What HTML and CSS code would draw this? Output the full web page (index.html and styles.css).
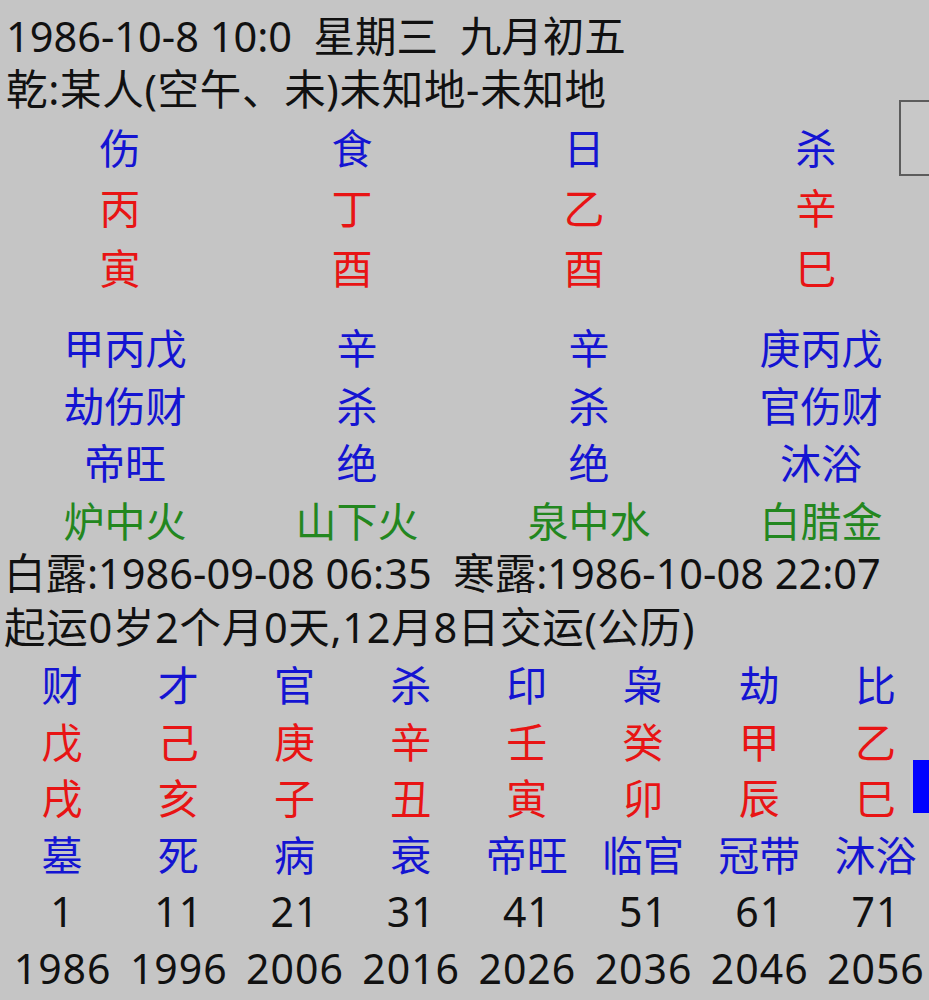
FILE: index.html
```html
<!DOCTYPE html>
<html lang="zh-CN">
<head>
<meta charset="utf-8">
<title>排盘</title>
<link rel="stylesheet" href="styles.css">
</head>
<body>
<div class="screen">
  <div class="header">
    <div class="line">1986-10-8 10:0&nbsp;&nbsp;星期三&nbsp;&nbsp;九月初五</div>
    <div class="line wide">乾:某人(空午、未)未知地-未知地</div>
  </div>

  <div class="pillars">
    <div class="cell blue">伤</div><div class="cell blue">食</div><div class="cell blue">日</div><div class="cell blue">杀</div>
    <div class="cell red">丙</div><div class="cell red">丁</div><div class="cell red">乙</div><div class="cell red">辛</div>
    <div class="cell red">寅</div><div class="cell red">酉</div><div class="cell red">酉</div><div class="cell red">巳</div>
  </div>

  <div class="hidden">
    <div class="cell blue">甲丙戊</div><div class="cell blue">辛</div><div class="cell blue">辛</div><div class="cell blue">庚丙戊</div>
    <div class="cell blue">劫伤财</div><div class="cell blue">杀</div><div class="cell blue">杀</div><div class="cell blue">官伤财</div>
    <div class="cell blue">帝旺</div><div class="cell blue">绝</div><div class="cell blue">绝</div><div class="cell blue">沐浴</div>
    <div class="cell green">炉中火</div><div class="cell green">山下火</div><div class="cell green">泉中水</div><div class="cell green">白腊金</div>
  </div>

  <div class="info">
    <div class="line">白露:1986-09-08 06:35&nbsp;&nbsp;寒露:1986-10-08 22:07</div>
    <div class="line wide">起运0岁2个月0天,12月8日交运(公历)</div>
  </div>

  <div class="luck">
    <div class="cell blue">财</div><div class="cell blue">才</div><div class="cell blue">官</div><div class="cell blue">杀</div><div class="cell blue">印</div><div class="cell blue">枭</div><div class="cell blue">劫</div><div class="cell blue">比</div>
    <div class="cell red">戊</div><div class="cell red">己</div><div class="cell red">庚</div><div class="cell red">辛</div><div class="cell red">壬</div><div class="cell red">癸</div><div class="cell red">甲</div><div class="cell red">乙</div>
    <div class="cell red">戌</div><div class="cell red">亥</div><div class="cell red">子</div><div class="cell red">丑</div><div class="cell red">寅</div><div class="cell red">卯</div><div class="cell red">辰</div><div class="cell red">巳</div>
    <div class="cell blue">墓</div><div class="cell blue">死</div><div class="cell blue">病</div><div class="cell blue">衰</div><div class="cell blue">帝旺</div><div class="cell blue">临官</div><div class="cell blue">冠带</div><div class="cell blue">沐浴</div>
    <div class="cell num">1</div><div class="cell num">11</div><div class="cell num">21</div><div class="cell num">31</div><div class="cell num">41</div><div class="cell num">51</div><div class="cell num">61</div><div class="cell num">71</div>
    <div class="cell num">1986</div><div class="cell num">1996</div><div class="cell num">2006</div><div class="cell num">2016</div><div class="cell num">2026</div><div class="cell num">2036</div><div class="cell num">2046</div><div class="cell num">2056</div>
  </div>

  <div class="scroll-thumb"></div>
  <div class="scroll-marker"></div>
</div>
</body>
</html>
```

FILE: styles.css
```css
html, body {
  margin: 0;
  padding: 0;
  background: #c5c5c5;
}

.screen {
  position: relative;
  width: 929px;
  height: 1000px;
  overflow: hidden;
  background: #c5c5c5;
  color: #111111;
  font-family: "Noto Sans", "Noto Sans CJK SC", sans-serif;
  font-size: 41px;
}

.header {
  padding: 10px 0 0 6px;
  line-height: 53px;
  font-size: 41.5px;
}

.line {
  white-space: nowrap;
}

.wide {
  letter-spacing: 0.7px;
}

.pillars {
  display: grid;
  grid-template-columns: repeat(4, 232px);
  padding-left: 4px;
  margin-top: 2px;
  line-height: 60px;
}

.hidden {
  display: grid;
  grid-template-columns: repeat(4, 232px);
  padding-left: 9px;
  margin-top: 22px;
  line-height: 57.5px;
}

.info {
  padding-left: 4px;
  line-height: 54px;
  margin-top: -4px;
  font-size: 41.5px;
}

.luck {
  display: grid;
  grid-template-columns: repeat(8, 116.2px);
  padding-left: 4px;
  margin-top: 3px;
  line-height: 56.5px;
}

.cell {
  text-align: center;
  white-space: nowrap;
}

.num {
  letter-spacing: 1px;
  text-indent: 1px;
}

.blue { color: #1414d2; }
.red { color: #e81414; }
.green { color: #23871f; }

.scroll-thumb {
  position: absolute;
  left: 899px;
  top: 100px;
  width: 40px;
  height: 72px;
  border: 2px solid #5c5c5c;
  background: #c8c8c8;
}

.scroll-marker {
  position: absolute;
  left: 913px;
  top: 760px;
  width: 16px;
  height: 53px;
  background: #0000ff;
}
```
